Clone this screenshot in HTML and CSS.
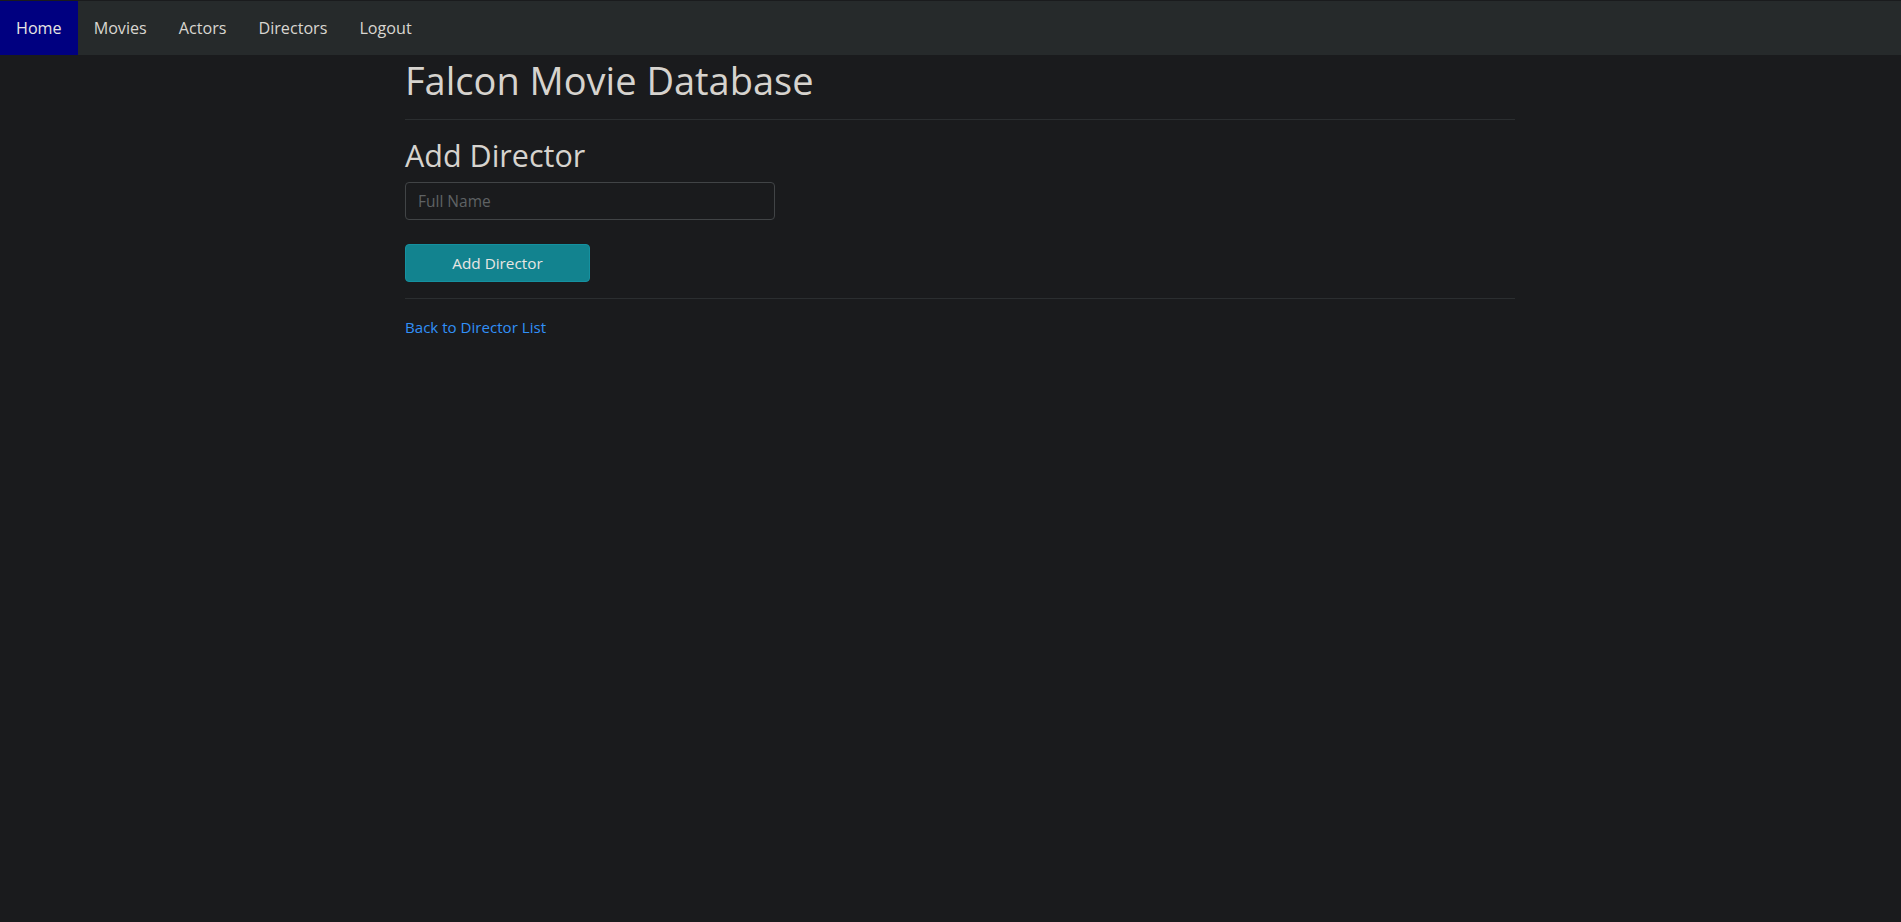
FILE: index.html
```html
<!DOCTYPE html>
<html lang="en">
<head>
<meta charset="utf-8">
<title>Falcon Movie Database - Add Director</title>
<link rel="stylesheet" href="styles.css">
</head>
<body>
<nav class="navbar">
  <a class="nav-link active" href="#">Home</a>
  <a class="nav-link" href="#">Movies</a>
  <a class="nav-link" href="#">Actors</a>
  <a class="nav-link" href="#">Directors</a>
  <a class="nav-link" href="#">Logout</a>
</nav>
<main class="container">
  <h1 class="title">Falcon Movie Database</h1>
  <hr class="rule rule-top">
  <h2 class="subtitle">Add Director</h2>
  <form class="form">
    <input class="form-control" type="text" placeholder="Full Name">
    <button class="btn" type="button">Add Director</button>
  </form>
  <hr class="rule rule-bottom">
  <a class="back-link" href="#">Back to Director List</a>
</main>
</body>
</html>
```
FILE: styles.css
```css
* { box-sizing: border-box; }
html, body {
  margin: 0;
  background: #1a1b1d;
}
body {
  padding-top: 1px;
  font-family: "Open Sans", "Noto Sans", sans-serif;
  font-size: 16px;
  line-height: 24px;
  color: #d6d3ce;
}
.navbar {
  display: flex;
  align-items: stretch;
  height: 54px;
  background: #262a2b;
}
.nav-link {
  display: flex;
  align-items: center;
  padding: 0 16px;
  color: #d9d6d1;
  text-decoration: none;
  font-size: 16.15px;
}
.nav-link.active {
  background: #000080;
  color: #e8e6e3;
}
.container {
  width: 1110px;
  margin-left: calc(50% - 545.5px);
}
.title {
  margin: 1.5px 0 0;
  font-size: 38px;
  line-height: 46px;
  font-weight: 400;
  color: #d6d3ce;
}
.rule {
  margin: 16px 0 0;
  border: 0;
  border-top: 1px solid #2b2e30;
  height: 0;
}
.subtitle {
  margin: 16px 0 0;
  font-size: 30.5px;
  line-height: 38px;
  font-weight: 400;
  color: #d6d3ce;
}
.form {
  display: flex;
  flex-direction: column;
  align-items: flex-start;
}
.form-control {
  margin-top: 8px;
  width: 370px;
  height: 38px;
  padding: 6px 12px;
  background: #1a1b1d;
  border: 1px solid #414446;
  border-radius: 4px;
  font-family: inherit;
  font-size: 15.5px;
  color: #d6d3ce;
  outline: none;
}
.form-control::placeholder {
  color: #5f6264;
}
.btn {
  margin-top: 24px;
  width: 185px;
  height: 38px;
  background: #12838f;
  border: 1px solid #1591a0;
  border-radius: 4px;
  color: #e8e6e3;
  font-family: inherit;
  font-size: 15.3px;
  line-height: 24px;
  cursor: pointer;
}
.rule-bottom {
  margin-top: 16px;
}
.back-link {
  display: inline-block;
  margin-top: 16px;
  color: #3190f8;
  text-decoration: none;
  font-size: 15.1px;
}
```
